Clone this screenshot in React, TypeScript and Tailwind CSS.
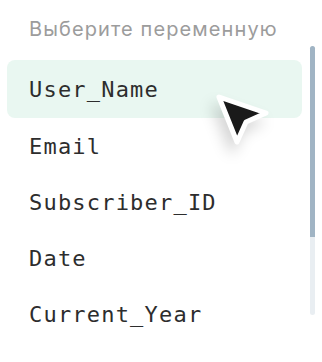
import React from 'react';

const variables = ['User_Name', 'Email', 'Subscriber_ID', 'Date', 'Current_Year'];

const Cursor: React.FC = () => (
  <svg
    className="absolute left-[200px] top-[86px] pointer-events-none"
    width="82"
    height="76"
    viewBox="200 86 82 76"
    style={{ filter: 'drop-shadow(-5px 9px 7px rgba(0,0,0,0.16))' }}
  >
    <path
      d="M219 97 L266 113 L246 122 L237 142 Z"
      fill="#1a1a1a"
      stroke="#ffffff"
      strokeWidth="5"
      strokeLinejoin="round"
    />
  </svg>
);

const App: React.FC = () => {
  return (
    <div className="relative w-[322px] h-[362px] bg-white overflow-hidden">
      <div className="flex">
        <div className="w-[295px] ml-[7px] pt-[16px]">
          <p className="pl-[22px] h-[44px] text-[20px] leading-[26px] tracking-[1.1px] text-[#9c9c9c] font-['Inter',sans-serif]">
            Выберите переменную
          </p>
          <ul className="font-['DejaVu_Sans_Mono',monospace] text-[22px] tracking-[1.2px] text-[#2d2d2d]">
            {variables.map((v, i) => (
              <li
                key={v}
                className={`flex items-center pl-[22px] ${
                  i === 0 ? 'h-[58px] bg-[#e9f7f1] rounded-[8px]' : 'h-[56px]'
                }`}
              >
                {v}
              </li>
            ))}
          </ul>
        </div>
        <div className="ml-[8px] mt-[46px] w-[5px] h-[269px] rounded-full bg-[#e9eef2] flex flex-col">
          <div className="h-[191px] rounded-t-full bg-[#a0b4c4]" />
        </div>
      </div>
      <Cursor />
    </div>
  );
};

export default App;
